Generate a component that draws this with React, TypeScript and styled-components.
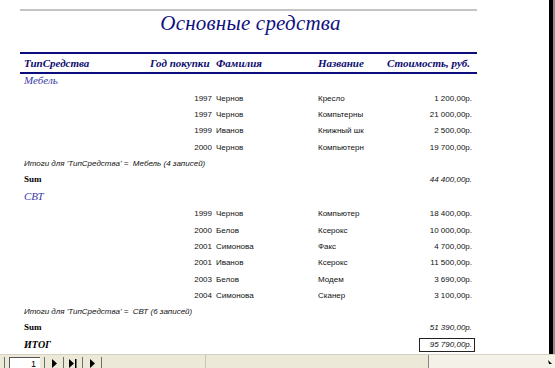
import React from "react";
import styled, { createGlobalStyle } from "styled-components";

const Global = createGlobalStyle`
  html, body { margin: 0; padding: 0; background: #ffffff; overflow: hidden; }
  #root { width: 555px; height: 368px; }
`;

const Window = styled.div`
  width: 555px;
  height: 368px;
  display: flex;
  flex-direction: column;
  overflow: hidden;
`;

const Main = styled.div`
  height: 355px;
  display: flex;
`;

const Paper = styled.div`
  flex: 1;
  background: #ffffff;
  overflow: hidden;
`;

const RightEdge = styled.div`
  width: 4px;
  background: #000000;
  border-right: 2px solid #8c8c88;
`;

const Report = styled.div`
  margin-left: 20px;
  width: 457px;
  display: flex;
  flex-direction: column;
`;

const TopRule = styled.div`
  margin-top: 9px;
  height: 2px;
  background: #c4c4c4;
`;

const Title = styled.div`
  height: 41px;
  line-height: 24px;
  text-align: center;
  font-family: "Liberation Serif", serif;
  font-style: italic;
  font-size: 21px;
  letter-spacing: 0.2px;
  color: #101080;
  padding-left: 4px;
`;

const cols = `130px 62px 105px 80px 1fr`;
const headCols = `130px 62px 105px 66px 1fr`;

const HeaderRow = styled.div`
  display: grid;
  grid-template-columns: ${headCols};
  padding-right: 5px;
  height: 18px;
  align-items: center;
  border-top: 2px solid #0c0c7c;
  border-bottom: 2px solid #0c0c7c;
  font-family: "Liberation Serif", serif;
  font-style: italic;
  font-weight: bold;
  font-size: 11px;
  color: #0c0c70;
`;

const HeadCell = styled.div<{ $align?: "left" | "right"; $pl?: number; $pr?: number }>`
  text-align: ${(p) => p.$align ?? "left"};
  padding-left: ${(p) => p.$pl ?? 0}px;
  padding-right: ${(p) => p.$pr ?? 0}px;
  white-space: nowrap;
`;

const Section = styled.div`
  display: flex;
  flex-direction: column;
  padding-bottom: 3px;
`;

const GroupLabel = styled.div`
  height: 13px;
  line-height: 13px;
  padding-left: 4px;
  margin-bottom: 3px;
  font-family: "Liberation Serif", serif;
  font-style: italic;
  font-size: 11px;
  color: #3a3aa6;
`;

const DataRow = styled.div`
  display: grid;
  grid-template-columns: ${cols};
  padding-right: 5px;
  height: 16.4px;
  align-items: center;
  font-family: "Liberation Sans", Arial, sans-serif;
  font-size: 8px;
  color: #111111;
`;

const Cell = styled.div<{ $col: number; $align?: "left" | "right"; $pl?: number }>`
  grid-column: ${(p) => p.$col};
  text-align: ${(p) => p.$align ?? "left"};
  padding-left: ${(p) => p.$pl ?? 0}px;
  white-space: nowrap;
  overflow: hidden;
`;

const TotalsRow = styled.div`
  height: 16px;
  line-height: 16px;
  padding-left: 4px;
  font-family: "Liberation Sans", Arial, sans-serif;
  font-style: italic;
  font-size: 8px;
  color: #111111;
  white-space: pre;
`;

const SumRow = styled.div`
  display: grid;
  grid-template-columns: ${cols};
  padding-right: 5px;
  height: 15px;
  align-items: center;
`;

const SumLabel = styled.div<{ $italic?: boolean }>`
  grid-column: 1;
  padding-left: 4px;
  font-family: "Liberation Serif", serif;
  font-weight: bold;
  font-style: ${(p) => (p.$italic ? "italic" : "normal")};
  font-size: ${(p) => (p.$italic ? 10 : 9)}px;
  color: #000000;
`;

const SumValue = styled.div`
  grid-column: 5;
  text-align: right;
  font-family: "Liberation Sans", Arial, sans-serif;
  font-style: italic;
  font-size: 8px;
  color: #111111;
`;

const GrandRow = styled.div`
  display: grid;
  grid-template-columns: ${cols};
  padding-right: 5px;
  height: 14px;
  align-items: center;
`;

const GrandBox = styled.div`
  grid-column: 5;
  justify-self: end;
  margin-right: -3px;
  width: 52px;
  height: 12px;
  border: 1px solid #222222;
  line-height: 12px;
  text-align: right;
  padding-right: 2px;
  box-sizing: content-box;
  font-family: "Liberation Sans", Arial, sans-serif;
  font-style: italic;
  font-size: 8px;
  color: #111111;
`;

/* bottom bar */
const StatusBar = styled.div`
  height: 13px;
  display: flex;
  background: #ece9d8;
  border-top: 1px solid #d6d2c2;
  overflow: hidden;
`;

const Navigator = styled.div`
  width: 205px;
  display: flex;
  align-items: flex-start;
  padding-top: 2px;
`;

const Sep = styled.div`
  width: 1px;
  height: 12px;
  background: #6f6f6a;
  margin: 0 4px;
`;

const RecordBox = styled.div`
  width: 26px;
  height: 12px;
  background: #ffffff;
  border-top: 1px solid #555555;
  border-left: 1px solid #555555;
  font-family: "Liberation Sans", Arial, sans-serif;
  font-size: 9px;
  line-height: 12px;
  text-align: right;
  padding-right: 4px;
  color: #000;
`;

const NavIcon = styled.svg`
  width: 10px;
  height: 11px;
  margin-top: 1px;
`;

const ScrollArea = styled.div`
  flex: 1;
  display: flex;
  background: #f3f1e8;
  border-left: 1px solid #c9c5b5;
`;

const Thumb = styled.div`
  width: 222px;
  background: #ece9d8;
  border-right: 1px solid #8a877c;
`;

const Grip = styled.svg`
  margin-left: auto;
  width: 7px;
  height: 8px;
  margin-top: 4px;
  margin-right: 1px;
`;

type Item = { year: number; name: string; title: string; cost: string };

const furniture: Item[] = [
  { year: 1997, name: "Чернов", title: "Кресло", cost: "1 200,00р." },
  { year: 1997, name: "Чернов", title: "Компьтерны", cost: "21 000,00р." },
  { year: 1999, name: "Иванов", title: "Книжный шк", cost: "2 500,00р." },
  { year: 2000, name: "Чернов", title: "Компьютерн", cost: "19 700,00р." },
];

const computers: Item[] = [
  { year: 1999, name: "Чернов", title: "Компьютер", cost: "18 400,00р." },
  { year: 2000, name: "Белов", title: "Ксерокс", cost: "10 000,00р." },
  { year: 2001, name: "Симонова", title: "Факс", cost: "4 700,00р." },
  { year: 2001, name: "Иванов", title: "Ксерокс", cost: "11 500,00р." },
  { year: 2003, name: "Белов", title: "Модем", cost: "3 690,00р." },
  { year: 2004, name: "Симонова", title: "Сканер", cost: "3 100,00р." },
];

function Group({ label, items, totals, sum }: { label: string; items: Item[]; totals: string; sum: string }) {
  return (
    <Section>
      <GroupLabel>{label}</GroupLabel>
      {items.map((it, i) => (
        <DataRow key={i}>
          <Cell $col={2} $align="right">{it.year}</Cell>
          <Cell $col={3} $pl={4}>{it.name}</Cell>
          <Cell $col={4} $pl={1}>{it.title}</Cell>
          <Cell $col={5} $align="right">{it.cost}</Cell>
        </DataRow>
      ))}
      <TotalsRow>{totals}</TotalsRow>
      <SumRow>
        <SumLabel>Sum</SumLabel>
        <SumValue>{sum}</SumValue>
      </SumRow>
    </Section>
  );
}

export default function App() {
  return (
    <Window>
      <Global />
      <Main>
        <Paper>
          <Report>
            <TopRule />
            <Title>Основные средства</Title>
            <HeaderRow>
              <HeadCell $pl={4}>ТипСредства</HeadCell>
              <HeadCell $align="right" $pr={7}>Год покупки</HeadCell>
              <HeadCell $pl={4}>Фамилия</HeadCell>
              <HeadCell $pl={1}>Название</HeadCell>
              <HeadCell $align="right" $pr={2}>Стоимость, руб.</HeadCell>
            </HeaderRow>
            <Group
              label="Мебель"
              items={furniture}
              totals={"Итоги для 'ТипСредства' =  Мебель (4 записей)"}
              sum="44 400,00р."
            />
            <Group
              label="СВТ"
              items={computers}
              totals={"Итоги для 'ТипСредства' =  СВТ (6 записей)"}
              sum="51 390,00р."
            />
            <GrandRow>
              <SumLabel $italic>ИТОГ</SumLabel>
              <GrandBox>95 790,00р.</GrandBox>
            </GrandRow>
          </Report>
        </Paper>
        <RightEdge />
      </Main>
      <StatusBar>
        <Navigator>
          <Sep />
          <RecordBox>1</RecordBox>
          <Sep />
          <NavIcon viewBox="0 0 10 11">
            <path d="M3 1 L8 5.5 L3 10 Z" fill="#000" />
          </NavIcon>
          <Sep />
          <NavIcon viewBox="0 0 10 11">
            <path d="M1 1 L6 5.5 L1 10 Z" fill="#000" />
            <rect x="7" y="1" width="1.5" height="9" fill="#000" />
          </NavIcon>
          <Sep />
          <NavIcon viewBox="0 0 10 11">
            <path d="M3 1 L8 5.5 L3 10 Z" fill="#000" />
          </NavIcon>
          <Sep />
        </Navigator>
        <ScrollArea>
          <Thumb />
          <Grip viewBox="0 0 7 8">
            <path d="M1 1 L5 5 L2 5 Z" fill="#000" />
          </Grip>
        </ScrollArea>
      </StatusBar>
    </Window>
  );
}
